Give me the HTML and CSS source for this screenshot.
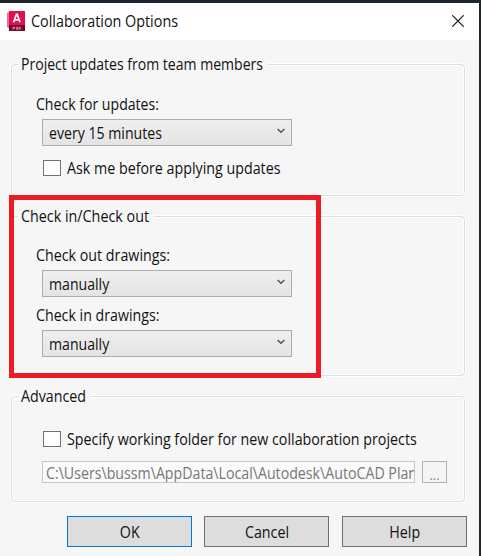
FILE: index.html
```html
<!DOCTYPE html>
<html lang="en">
<head>
<meta charset="utf-8">
<title>Collaboration Options</title>
<link rel="stylesheet" href="styles.css">
</head>
<body>
<main class="dialog">
  <header class="titlebar">
    <svg class="app-icon" viewBox="0 0 18 20" width="18" height="20">
      <path d="M0 2L3 0V18L0 16Z" fill="#f06a91"/>
      <path d="M2 0H18V15H2Z" fill="#e50e52"/>
      <path d="M2 14H18V20H2Z" fill="#76062d"/>
      <path d="M6.6 11.2L9.4 3.4H10.2L13 11.2M7.6 8.8H12" fill="none" stroke="#fff" stroke-width="1.7"/>
      <path d="M6 18.5V16.2H7.8V17.3H6M9 16.2H10.8V18.3H9M9.2 17.2H10.8M12 16.2H13L13.8 16.8V17.8L13 18.3H12Z" fill="none" stroke="#e8b8c8" stroke-width=".7"/>
    </svg>
    <h1 class="title"><span class="t-title">Collaboration Options</span></h1>
    <svg class="close" viewBox="0 0 12 12" width="12" height="12"><path d="M.3 .3L11.7 11.7M11.7 .3L.3 11.7" stroke="#111" stroke-width="1.15"/></svg>
  </header>

  <section class="group updates">
    <h2 class="legend legend-updates"><span class="t-project">Project updates from team members</span></h2>
    <div class="label"><span class="t-check">Check for updates:</span></div>
    <div class="combo"><span class="t-every">every 15 minutes</span><svg class="chevron" viewBox="0 0 8 6" width="8" height="6"><path d="M.6 1L4 4.2L7.4 1" fill="none" stroke="#555" stroke-width="1.5"/></svg></div>
    <div class="check"><i class="box"></i><span class="t-ask">Ask me before applying updates</span></div>
  </section>

  <section class="group checking">
    <h2 class="legend legend-checking"><span class="t-inout">Check in/Check out</span></h2>
    <div class="label"><span class="t-out">Check out drawings:</span></div>
    <div class="combo"><span class="t-man">manually</span><svg class="chevron" viewBox="0 0 8 6" width="8" height="6"><path d="M.6 1L4 4.2L7.4 1" fill="none" stroke="#555" stroke-width="1.5"/></svg></div>
    <div class="label"><span class="t-in">Check in drawings:</span></div>
    <div class="combo"><span class="t-man">manually</span><svg class="chevron" viewBox="0 0 8 6" width="8" height="6"><path d="M.6 1L4 4.2L7.4 1" fill="none" stroke="#555" stroke-width="1.5"/></svg></div>
    <div class="highlight"></div>
  </section>

  <section class="group advanced">
    <h2 class="legend legend-advanced"><span class="t-adv">Advanced</span></h2>
    <div class="check"><i class="box"></i><span class="t-spec">Specify working folder for new collaboration projects</span></div>
    <div class="path-row">
      <div class="path"><span class="t-path">C:\Users\bussm\AppData\Local\Autodesk\AutoCAD Plan</span></div>
      <div class="browse">...</div>
    </div>
  </section>

  <footer class="actions">
    <div class="button primary"><span class="t-ok">OK</span></div>
    <div class="button"><span class="t-cancel">Cancel</span></div>
    <div class="button"><span class="t-help">Help</span></div>
  </footer>
</main>
</body>
</html>
```
FILE: styles.css
```css
* { box-sizing: border-box; }
body {
  margin: 0;
  padding: 3px 2px 0 0;
  height: 556px;
  overflow: hidden;
  background: #1d252e;
  color: #111;
  font: 15.5px/20px "Open Sans", "Noto Sans", sans-serif;
}
.dialog { height: 553px; background: #f6f6f6; }
.titlebar {
  height: 37px;
  display: flex;
  align-items: center;
  padding: 0 15px 0 7px;
  background: #fff;
}
.app-icon { flex: none; margin-top: -2px; }
.title { margin: -2px 0 0 6px; font-size: inherit; font-weight: 400; }
.close { margin: -1px 0 0 auto; }

/* Condensed label text */
span {
  display: inline-block;
  white-space: pre;
  transform: scaleX(.92);
  transform-origin: 0 50%;
}
.t-title { transform: scaleX(.926); }
.t-project { transform: scaleX(.906); }
.t-check { transform: scaleX(.909); }
.t-every { transform: scaleX(.911); }
.t-inout { transform: scaleX(.924); }
.t-out { transform: scaleX(.92); }
.t-in { transform: scaleX(.916); }
.t-man { transform: scaleX(.91); }
.t-path { transform: scaleX(.915); }
.t-ok, .t-cancel, .t-help { transform-origin: 50% 50%; }

.group {
  position: relative;
  width: 454px;
  margin-left: 11px;
  border: 1px solid #d5dfe8;
  border-radius: 4px;
  box-shadow: 0 0 0 1px #fff, inset 0 0 0 1px #fff;
}
.updates { height: 132px; margin-top: 24px; }
.checking { height: 160px; margin-top: 20px; }
.advanced { height: 106px; margin-top: 20px; }
.legend {
  height: 20px;
  margin: -11px 0 0 6px;
  padding-left: 3px;
  background: #f6f6f6;
  font-size: inherit;
  font-weight: 400;
}
.legend-updates { width: 250px; }
.legend-checking { width: 136px; }
.legend-advanced { width: 73px; }
.label { height: 20px; margin: 20px 0 5px 24px; }
.checking .label { margin-top: 19px; }
.checking .combo + .label { margin-top: 8px; }
.combo {
  width: 250px;
  height: 27px;
  margin-left: 30px;
  padding: 1px 6px;
  display: flex;
  align-items: center;
  border: 1px solid #acacac;
  background: linear-gradient(#efefef, #e4e4e4);
}
.chevron { margin: -3px 0 0 auto; }
.check { display: flex; align-items: center; height: 20px; margin: 12px 0 0 31px; }
.advanced .check { margin-top: 23px; }
.box { width: 18px; height: 16px; margin-right: 6px; border: 1px solid #707070; background: #fff; }
.path-row { display: flex; gap: 7px; margin: 12px 0 0 30px; }
.path {
  width: 373px;
  height: 22px;
  padding: 1px 0 0 3px;
  overflow: hidden;
  border: 1px solid #c7c7ca;
  background: #fafafa;
  color: #777;
}
.browse {
  width: 25px;
  height: 22px;
  padding-top: 3px;
  border: 1px solid #adb2b5;
  background: #f4f4f4;
  color: #838383;
  font-size: 13px;
  text-align: center;
}
.highlight {
  position: absolute;
  left: -3px;
  top: -22px;
  width: 312px;
  height: 183px;
  border: 5px solid #ed1c24;
}
.actions { display: flex; gap: 12px; margin: 14px 0 0 67px; }
.button {
  width: 125px;
  height: 31px;
  display: flex;
  align-items: center;
  justify-content: center;
  padding-top: 1px;
  border: 1px solid #707070;
  background: #ddd;
}
.button:last-child { margin-left: 1px; }
.primary { border-color: #0078d7; }
```
